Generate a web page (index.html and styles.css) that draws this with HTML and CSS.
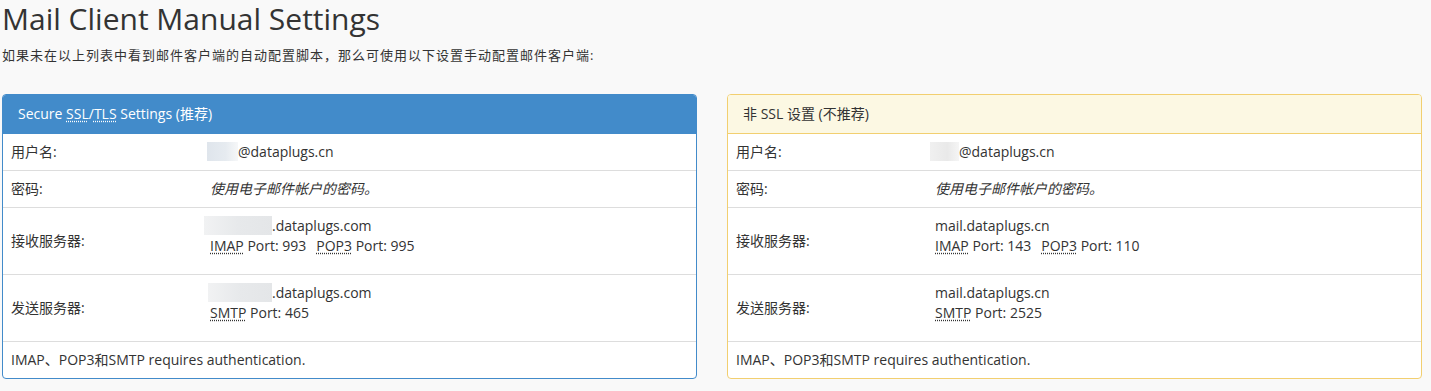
FILE: index.html
```html
<!DOCTYPE html>
<html lang="zh-CN">
<head>
<meta charset="utf-8">
<title>Mail Client Manual Settings</title>
<link rel="stylesheet" href="styles.css">
</head>
<body>
<div class="page">
  <h1 class="title">Mail Client Manual Settings</h1>
  <p class="intro">如果未在以上列表中看到邮件客户端的自动配置脚本，那么可使用以下设置手动配置邮件客户端:</p>
  <div class="panels">
    <div class="panel panel-primary">
      <div class="panel-heading">Secure <abbr>SSL</abbr>/<abbr>TLS</abbr> Settings (推荐)</div>
      <table class="settings">
        <colgroup><col class="col-label"><col></colgroup>
        <tr><td>用户名:</td><td class="val"><span class="redact r-user"></span>@dataplugs.cn</td></tr>
        <tr><td>密码:</td><td class="val"><em>使用电子邮件帐户的密码。</em></td></tr>
        <tr class="tall"><td>接收服务器:</td><td class="val"><div><span class="redact r-host"></span>.dataplugs.com</div><div class="ports"><span class="port"><abbr>IMAP</abbr> Port: 993</span><span class="port"><abbr>POP3</abbr> Port: 995</span></div></td></tr>
        <tr class="tall"><td>发送服务器:</td><td class="val"><div><span class="redact r-host r-host2"></span>.dataplugs.com</div><div class="ports"><span class="port"><abbr>SMTP</abbr> Port: 465</span></div></td></tr>
        <tr><td colspan="2">IMAP、POP3和SMTP requires authentication.</td></tr>
      </table>
    </div>
    <div class="panel panel-warning">
      <div class="panel-heading">非 SSL 设置 (不推荐)</div>
      <table class="settings">
        <colgroup><col class="col-label"><col></colgroup>
        <tr><td>用户名:</td><td class="val"><span class="redact r-user r-gray"></span>@dataplugs.cn</td></tr>
        <tr><td>密码:</td><td class="val"><em>使用电子邮件帐户的密码。</em></td></tr>
        <tr class="tall"><td>接收服务器:</td><td class="val"><div>mail.dataplugs.cn</div><div class="ports"><span class="port"><abbr>IMAP</abbr> Port: 143</span><span class="port"><abbr>POP3</abbr> Port: 110</span></div></td></tr>
        <tr class="tall"><td>发送服务器:</td><td class="val"><div>mail.dataplugs.cn</div><div class="ports"><span class="port"><abbr>SMTP</abbr> Port: 2525</span></div></td></tr>
        <tr><td colspan="2">IMAP、POP3和SMTP requires authentication.</td></tr>
      </table>
    </div>
  </div>
</div>
</body>
</html>
```

FILE: styles.css
```css
html, body {
  margin: 0;
  padding: 0;
  background: #f9f9f9;
}
body {
  font-family: "Open Sans", "Noto Sans CJK SC", sans-serif;
  font-size: 14px;
  line-height: 20px;
  color: #333;
}
.page {
  padding: 0 9px 0 2px;
}
.title {
  margin: 2px 0 0 0;
  font-size: 30px;
  line-height: 33px;
  font-weight: 400;
  color: #333;
}
.intro {
  margin: 10px 0 0 0;
  font-size: 13px;
  line-height: 20px;
  letter-spacing: 1px;
}
.panels {
  margin-top: 29px;
  display: grid;
  grid-template-columns: 1fr 1fr;
  column-gap: 30px;
  align-items: start;
}
.panel {
  background: #fff;
  border: 1px solid #428bca;
  border-radius: 4px;
  overflow: hidden;
}
.panel-heading {
  padding: 10px 15px;
  line-height: 18px;
  font-size: 14px;
  border-bottom: 1px solid transparent;
}
.panel-primary .panel-heading {
  background: #428bca;
  border-bottom-color: #428bca;
  color: #fff;
}
.panel-warning {
  border-color: #f2cf70;
}
.panel-warning .panel-heading {
  background: #fcf8e3;
  border-bottom-color: #f2cf70;
  color: #333;
}
abbr {
  text-decoration: underline dotted;
  text-underline-offset: 2px;
  cursor: help;
}
.settings {
  width: 100%;
  border-collapse: collapse;
  table-layout: fixed;
}
.col-label {
  width: 199px;
}
.settings td {
  padding: 8px;
  vertical-align: middle;
  border-top: 1px solid #ddd;
}
.settings tr:first-child td {
  border-top: 0;
}
.settings tr.tall td.val {
  padding-bottom: 18px;
}
.settings em {
  font-style: italic;
}
.port {
  margin-right: 10px;
}
.redact {
  display: inline-block;
  vertical-align: -4px;
  height: 19px;
  background: linear-gradient(90deg, #dfe5ec 0%, #e6ebf0 60%, #f6f7f8 100%);
}
.r-user {
  width: 31px;
  margin-left: -3px;
}
.r-gray {
  width: 29px;
  margin-left: -5px;
  background: linear-gradient(90deg, #f0f0f0 0%, #e9e9e9 60%, #f5f5f5 100%);
}
.r-host {
  width: 68px;
  margin-left: -6px;
  background: linear-gradient(90deg, #f1f2f3 0%, #e7e9eb 50%, #e4e6e8 100%);
}
.r-host2 {
  width: 64px;
  margin-left: -2px;
}
```
